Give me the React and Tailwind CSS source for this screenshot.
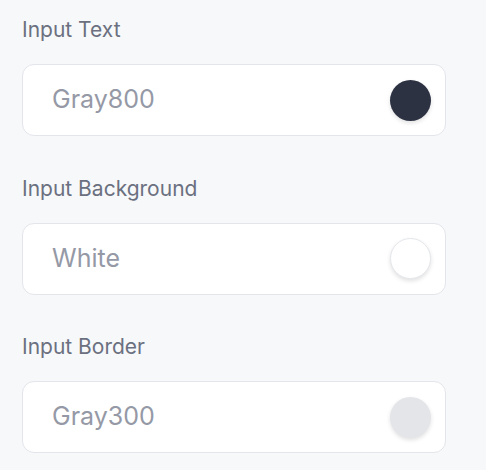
const FIELDS = [
  { label: "Input Text", value: "Gray800", swatch: "bg-[#2d3243]" },
  { label: "Input Background", value: "White", swatch: "bg-white border border-gray-200" },
  { label: "Input Border", value: "Gray300", swatch: "bg-[#e4e5e9]" },
]

export default function App() {
  return (
    <div className="min-h-[470px] bg-[#f7f8fa] px-[22px] pt-[16px] font-['Inter',sans-serif]">
      <div className="flex w-[424px] flex-col gap-[38.5px]">
        {FIELDS.map((f) => (
          <div key={f.label} className="flex flex-col gap-[20px]">
            <label className="text-[21px] leading-[28px] text-[#6b7080]">{f.label}</label>
            <div className="flex h-[72px] items-center justify-between rounded-[12px] border border-[#e3e5ea] bg-white pl-[29px] pr-[14px]">
              <span className="text-[25px] text-[#9599a6]">{f.value}</span>
              <span className={`h-[41px] w-[41px] rounded-full shadow-[0_2px_4px_rgba(0,0,0,0.12)] ${f.swatch}`} />
            </div>
          </div>
        ))}
      </div>
    </div>
  )
}
